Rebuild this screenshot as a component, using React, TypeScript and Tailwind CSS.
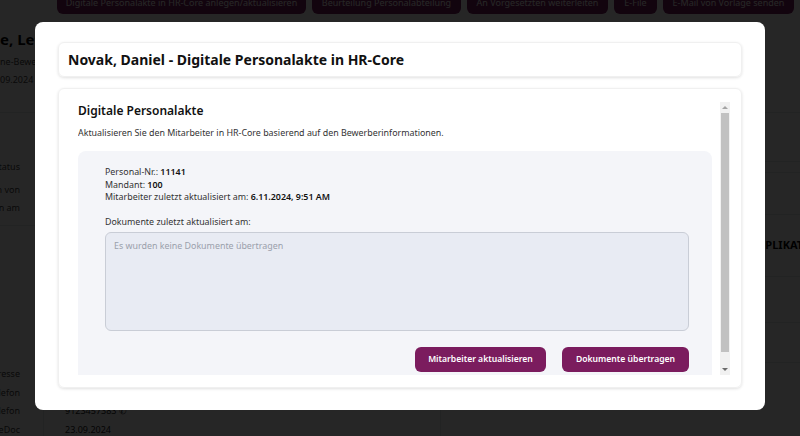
import React from 'react';

const topActions = [
  { label: 'Digitale Personalakte in HR-Core anlegen/aktualisieren', w: 'w-[249px]' },
  { label: 'Beurteilung Personalabteilung', w: 'w-[149px]' },
  { label: 'An Vorgesetzten weiterleiten', w: 'w-[141px]' },
  { label: 'E-File', w: 'w-[43px]' },
  { label: 'E-Mail von Vorlage senden', w: 'w-[131px]' },
];

// text whose start lies left of the viewport: the prefix sits in a fixed-width box off screen
function Clipped({ prefix, rest, w }: { prefix: string; rest: string; w: string }) {
  return (
    <div className="flex whitespace-nowrap">
      <span className={`${w} shrink-0 overflow-hidden flex justify-end`}>{prefix}</span>
      <span>{rest}</span>
    </div>
  );
}

function BackgroundPage() {
  return (
    <div className="flex flex-col h-full">
      <div className="flex gap-[6px] pl-[57px] h-[14px] items-end">
        {topActions.map((a) => (
          <div
            key={a.label}
            className={`${a.w} shrink-0 h-[26px] rounded-b-md bg-[#7b1c5e] text-white text-[9px] flex items-end justify-center pb-[5px] whitespace-nowrap overflow-hidden`}
          >
            {a.label}
          </div>
        ))}
      </div>
      <div className="flex flex-col border-b border-[#e5e7eb] h-[99px] ml-[-70px] pt-[13px]">
        <div className="text-[15px] font-bold text-black leading-[24px]">
          <Clipped prefix="Schulz" rest="e, Letizia" w="w-[70px]" />
        </div>
        <div className="text-[9px] text-[#444] mt-[4px]">
          <Clipped prefix="Onli" rest="ne-Bewerbung" w="w-[70px]" />
        </div>
        <div className="text-[9px] text-[#444] mt-[4px]">
          <Clipped prefix="23." rest="09.2024 14:12" w="w-[70px]" />
        </div>
      </div>
      <div className="flex flex-1">
        <div className="w-[44px] shrink-0 border-r border-[#e5e7eb] flex flex-col">
          <div className="h-[113px] flex flex-col items-end pr-[23px] pt-[44px] text-[9px] text-[#444] border-b border-[#e5e7eb] ml-[-80px] whitespace-nowrap">
            <span className="leading-[20px]">Bewerbungsstatus</span>
            <span className="leading-[26px]">Zugewiesen von</span>
            <span className="leading-[10px]">Eingegangen am</span>
          </div>
          <div className="flex-1" />
          <div className="flex flex-col items-end pr-[23px] mb-[-3px] text-[9px] text-[#444] leading-[18.5px] ml-[-80px] whitespace-nowrap">
            <span>E-Mail-Adresse</span>
            <span>Telefon</span>
            <span>Mobiltelefon</span>
            <span>eDoc</span>
          </div>
        </div>
        <div className="flex-1 flex flex-col justify-end pl-[21px] mb-[-3px] text-[9px] text-[#222] leading-[18.5px]">
          <span>9123457383 ✆</span>
          <span>23.09.2024</span>
        </div>
        <div className="w-[360px] border-l border-[#e5e7eb] flex flex-col">
          <div className="h-[49px] border-b border-[#e5e7eb]" />
          <div className="h-[11px] border-b border-[#e5e7eb]" />
          <div className="h-[42px] border-b border-[#e5e7eb]" />
          <div className="h-[62px] border-b border-[#e5e7eb] flex items-center pl-[308px] whitespace-nowrap">
            <span className="text-[11px] font-bold text-black">DUPLIKAT</span>
          </div>
          <div className="h-[46px] border-b border-[#e5e7eb]" />
          <div className="h-[40px] border-b border-[#e5e7eb]" />
        </div>
      </div>
    </div>
  );
}

function FakeScrollbar() {
  return (
    <div className="w-[10px] shrink-0 bg-[#f1f1f1] flex flex-col items-center">
      <div className="h-[11px] flex items-center justify-center">
        <div className="w-0 h-0 border-l-[3px] border-r-[3px] border-b-[3px] border-l-transparent border-r-transparent border-b-[#a3a3a3]" />
      </div>
      <div className="w-[8px] h-[239px] bg-[#c1c1c1]" />
      <div className="flex-1" />
      <div className="h-[11px] flex items-center justify-center">
        <div className="w-0 h-0 border-l-[3px] border-r-[3px] border-t-[3px] border-l-transparent border-r-transparent border-t-[#6b6b6b]" />
      </div>
    </div>
  );
}

function PersonalakteModal() {
  return (
    <div className="w-[730px] h-[388px] bg-white rounded-lg px-[23px] pt-[20px] pb-[22px] flex flex-col gap-[11px]">
      <div className="h-[35px] shrink-0 rounded-md border border-[#f0f0f0] shadow-[0_1px_3px_rgba(0,0,0,0.12)] flex items-center px-[9px]">
        <h1 className="text-[14px] font-bold text-[#111]">Novak, Daniel - Digitale Personalakte in HR-Core</h1>
      </div>
      <div className="flex-1 min-h-0 rounded-md border border-[#f0f0f0] shadow-[0_1px_3px_rgba(0,0,0,0.12)] flex gap-[8px] pl-[19px] pr-[11px] pt-[13px] pb-[12px]">
        <div className="flex-1 min-w-0 overflow-hidden flex flex-col">
          <h2 className="text-[12px] font-semibold text-[#111] leading-[18px]">Digitale Personalakte</h2>
          <p className="text-[8.9px] text-[#333] mt-[6px] leading-[14px]">
            Aktualisieren Sie den Mitarbeiter in HR-Core basierend auf den Bewerberinformationen.
          </p>
          <div className="mt-[11px] bg-[#f4f5f9] rounded-t-lg pl-[27px] pr-[23px] pt-[15px] pb-[20px] shrink-0">
            <div className="text-[8.9px] text-[#333] leading-[12.5px]">
              <div>
                Personal-Nr.: <span className="font-semibold text-[#111]">11141</span>
              </div>
              <div>
                Mandant: <span className="font-semibold text-[#111]">100</span>
              </div>
              <div>
                Mitarbeiter zuletzt aktualisiert am:{' '}
                <span className="font-semibold text-[#111]">6.11.2024, 9:51 AM</span>
              </div>
            </div>
            <div className="text-[8.9px] text-[#333] mt-[12px] leading-[12px]">Dokumente zuletzt aktualisiert am:</div>
            <textarea
              readOnly
              placeholder="Es wurden keine Dokumente übertragen"
              className="mt-[4px] block w-full h-[99px] resize-none rounded-md border border-[#c9cdd6] bg-[#e8ebf3] px-[8px] py-[6px] text-[8.9px] leading-[14px] placeholder:text-[#9aa0ab] outline-none"
            />
            <div className="flex justify-end gap-[16px] mt-[16px]">
              <button className="h-[25px] w-[131px] rounded-md bg-[#7b1c5e] text-white text-[8.6px] font-semibold">
                Mitarbeiter aktualisieren
              </button>
              <button className="h-[25px] w-[127px] rounded-md bg-[#7b1c5e] text-white text-[8.6px] font-semibold">
                Dokumente übertragen
              </button>
            </div>
          </div>
        </div>
        <FakeScrollbar />
      </div>
    </div>
  );
}

export default function App() {
  return (
    <div className="relative w-[800px] h-[436px] overflow-hidden bg-white font-['Noto_Sans',sans-serif]">
      <BackgroundPage />
      <div className="absolute inset-0 bg-black/85 flex justify-center pt-[22px]">
        <PersonalakteModal />
      </div>
    </div>
  );
}
